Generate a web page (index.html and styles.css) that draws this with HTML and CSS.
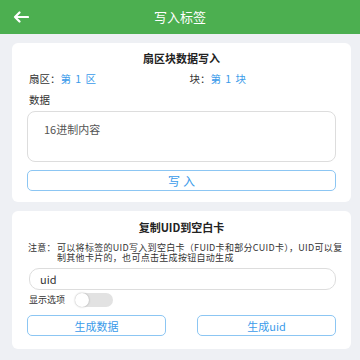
FILE: index.html
```html
<!DOCTYPE html>
<html lang="zh">
<head>
<meta charset="utf-8">
<link rel="stylesheet" href="styles.css">
</head>
<body>
<header class="topbar">
  <svg class="back" width="16" height="12" viewBox="0 0 16 12"><path d="M15 6H2M6.5 1.5L2 6l4.5 4.5" fill="none" stroke="#fff" stroke-width="2.2" stroke-linecap="round" stroke-linejoin="round"/></svg>
  <div class="title">写入标签</div>
</header>
<main class="page">
  <section class="card card-write">
    <h2 class="card-title">扇区块数据写入</h2>
    <div class="info-row">
      <div class="info">扇区：<span class="blue">第 1 区</span></div>
      <div class="info info-right">块：<span class="blue">第 1 块</span></div>
    </div>
    <div class="label">数据</div>
    <div class="textarea">16进制内容</div>
    <button class="btn btn-full">写入</button>
  </section>
  <section class="card card-uid">
    <h2 class="card-title">复制UID到空白卡</h2>
    <div class="note"><span class="note-label">注意：</span><span class="note-text">可以将标签的UID写入到空白卡（FUID卡和部分CUID卡），UID可以复制其他卡片的，也可点击生成按钮自动生成</span></div>
    <div class="input">uid</div>
    <div class="toggle-row">
      <span class="toggle-label">显示选项</span>
      <span class="switch"><span class="knob"></span></span>
    </div>
    <div class="btn-row">
      <button class="btn">生成数据</button>
      <button class="btn">生成uid</button>
    </div>
  </section>
</main>
</body>
</html>
```
FILE: styles.css
```css
* { box-sizing: border-box; }
html, body { margin: 0; padding: 0; }
body {
  width: 360px;
  height: 360px;
  overflow: hidden;
  background: #eef0f4;
  font-family: "Noto Sans CJK SC", "Noto Sans", sans-serif;
  color: #333;
}
.topbar {
  position: relative;
  height: 34px;
  background: #4caf50;
  display: flex;
  align-items: center;
  justify-content: center;
}
.back {
  position: absolute;
  left: 13px;
  top: 11px;
}
.title {
  color: #fff;
  font-size: 13px;
  line-height: 16px;
}
.page {
  padding: 9px 9px 0 12px;
  display: flex;
  flex-direction: column;
  gap: 9px;
}
.card {
  background: #fff;
  border-radius: 6px;
  padding: 8px 15px 11px 15px;
  display: flex;
  flex-direction: column;
}
.card-title {
  margin: 0;
  text-align: center;
  font-size: 11px;
  line-height: 14px;
  font-weight: 600;
  color: #222;
}
.info-row {
  margin-top: 7px;
  display: grid;
  grid-template-columns: 1fr 1fr;
  font-size: 10.5px;
  line-height: 14px;
}
.info { padding-left: 2px; }
.info-right { padding-left: 8px; }
.blue { color: #3a9bea; word-spacing: 2px; }
.label {
  margin-top: 7px;
  padding-left: 2px;
  font-size: 10.5px;
  line-height: 14px;
}
.textarea {
  margin-top: 4px;
  height: 51px;
  border: 1px solid #ddd;
  border-radius: 8px;
  padding: 9px 16px;
  font-size: 11px;
  line-height: 16px;
  color: #555;
}
.btn {
  height: 21px;
  border: 1.5px solid #8cc6f3;
  border-radius: 5px;
  background: #fff;
  color: #3a9bea;
  font-family: inherit;
  font-size: 11px;
  line-height: 16px;
  padding: 0;
}
.btn-full {
  margin-top: 8px;
  font-size: 12px;
  letter-spacing: 3px;
  text-indent: 3px;
}
.card-uid { padding: 9px 15px 13px 15px; }
.note {
  margin-top: 9px;
  margin-right: -13px;
  margin-left: 1px;
  display: flex;
  font-size: 9px;
  line-height: 9.5px;
  letter-spacing: 0.3px;
  color: #333;
}
.note-label { flex: none; width: 29px; }
.note-text { flex: 1; }
.input {
  margin-top: 6px;
  margin-left: 2px;
  height: 22px;
  border: 1px solid #ddd;
  border-radius: 10px;
  padding: 0 10px;
  font-size: 11px;
  line-height: 20px;
  color: #333;
}
.toggle-row {
  margin-top: 3px;
  margin-left: 2px;
  display: flex;
  align-items: center;
  gap: 10px;
  height: 14px;
}
.toggle-label { font-size: 9px; line-height: 12px; }
.switch {
  width: 38px;
  height: 14px;
  border-radius: 7px;
  background: #e2e2e2;
  display: flex;
  align-items: center;
}
.knob {
  width: 14px;
  height: 14px;
  border-radius: 50%;
  background: #fff;
  box-shadow: 0 0 2px rgba(0,0,0,0.3);
}
.btn-row {
  margin-top: 8px;
  display: grid;
  grid-template-columns: 139px 139px;
  justify-content: space-between;
}
```
